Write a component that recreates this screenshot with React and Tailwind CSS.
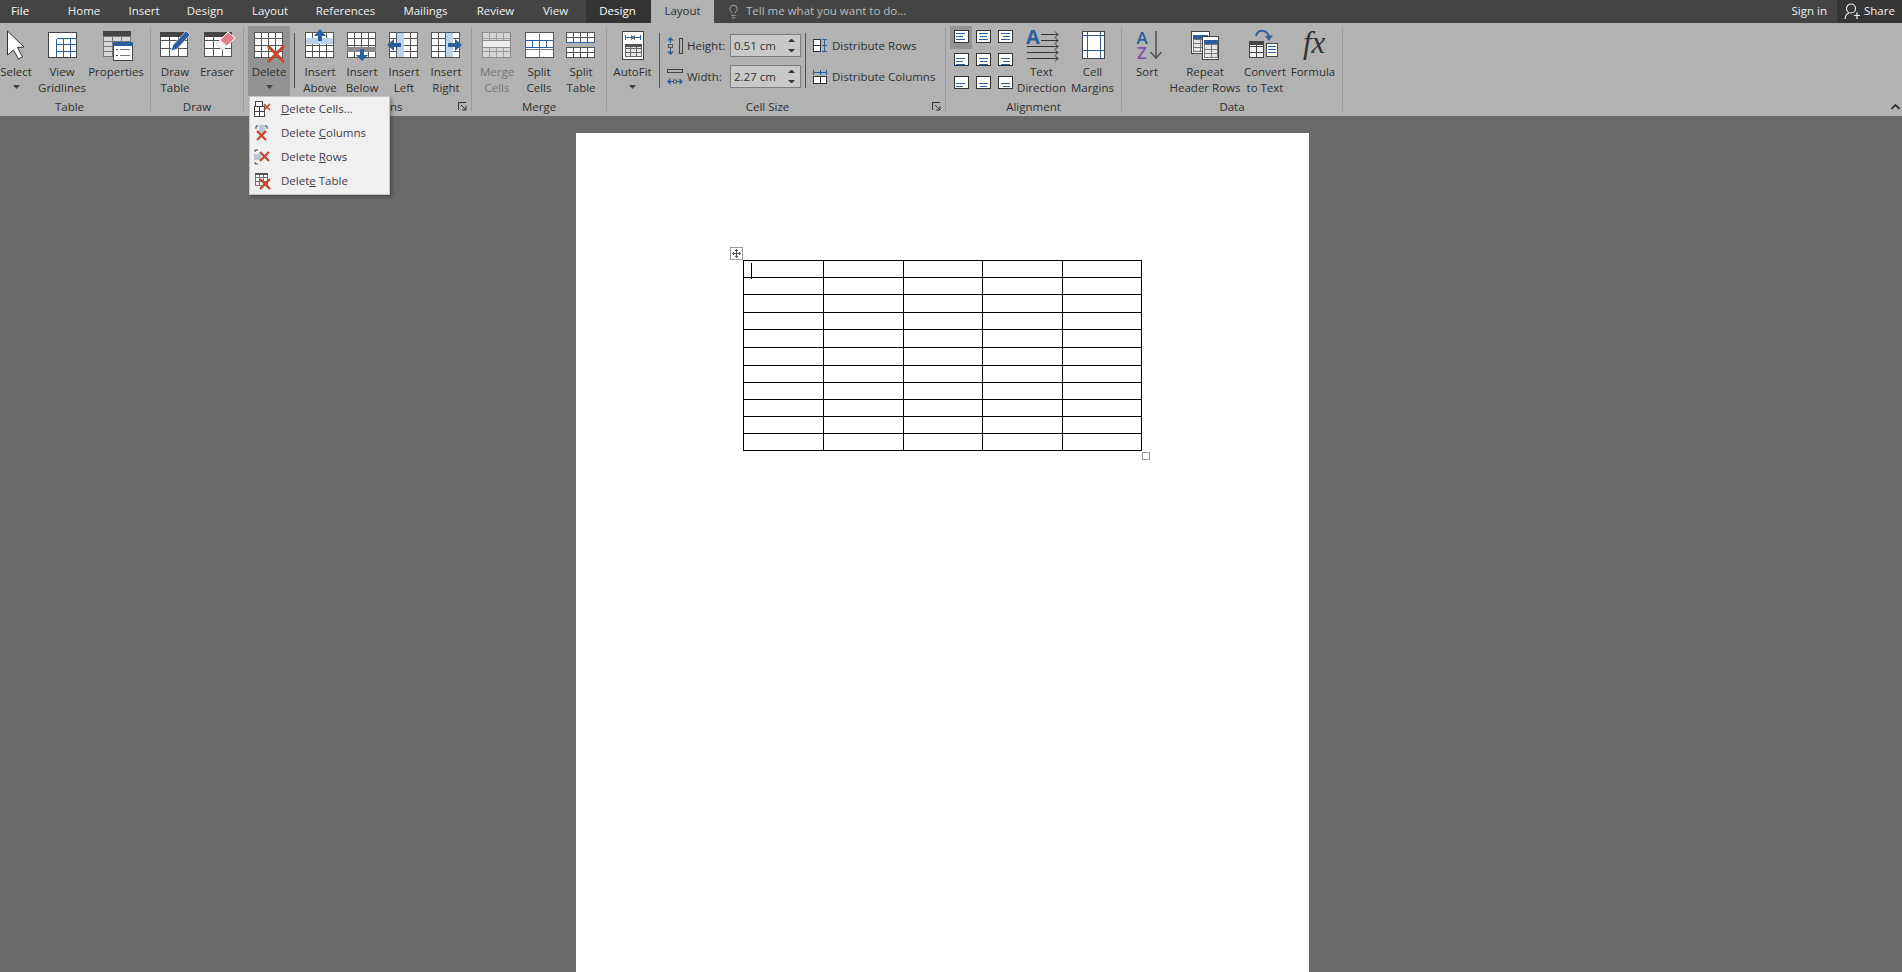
import { Lightbulb } from "lucide-react";

const BLUE = "#2b5f9e";
const RED = "#c8442b";
const DARK = "#444";

const tabs = [
  ["Home", "w-[56px]"],
  ["Insert", "w-[64px]"],
  ["Design", "w-[58px]"],
  ["Layout", "w-[72px]"],
  ["References", "w-[79px]"],
  ["Mailings", "w-[81px]"],
  ["Review", "w-[59px]"],
  ["View", "w-[61px]"],
];

function Grid({ x, y, w, h, c, r, s = DARK, fill = "white", head, inner }) {
  const lines = [];
  for (let i = 1; i < c; i++) {
    const lx = Math.round(x + (w * i) / c) + 0.5;
    lines.push(<line key={"c" + i} x1={lx} x2={lx} y1={y} y2={y + h} stroke={inner || s} />);
  }
  for (let i = 1; i < r; i++) {
    const ly = Math.round(y + (h * i) / r) + 0.5;
    lines.push(<line key={"r" + i} y1={ly} y2={ly} x1={x} x2={x + w} stroke={inner || s} />);
  }
  return (
    <g shapeRendering="crispEdges">
      <rect x={x + 0.5} y={y + 0.5} width={w} height={h} fill={fill} stroke={s} />
      {lines}
      {head && <rect x={x} y={y} width={w + 1} height={head} fill={s} />}
    </g>
  );
}

function Cross({ x, y, size = 14, w = 3 }) {
  return (
    <path d={`M${x} ${y}L${x + size} ${y + size}M${x + size} ${y}L${x} ${y + size}`} stroke={RED} strokeWidth={w} fill="none" />
  );
}

function Icon({ children }) {
  return (
    <svg width="36" height="38" viewBox="0 0 36 38" className="shrink-0">
      {children}
    </svg>
  );
}

const icons = {
  select: (
    <path d="M9.5 5 L26 21 L19.5 21.5 L24.5 31 L20.5 33 L15.5 24 L9.5 29 Z" fill="white" stroke="#333" />
  ),
  gridlines: (
    <g shapeRendering="crispEdges">
      <rect x="4.5" y="6.5" width="28" height="25" fill="white" stroke={DARK} />
      <path d="M12.5 12.5H32M12.5 18.5H32M12.5 25.5H32M12.5 12.5V31M19.5 12.5V31M26.5 12.5V31" stroke={BLUE} fill="none" />
    </g>
  ),
  properties: (
    <g shapeRendering="crispEdges">
      <Grid x={5} y={5} w={27} h={25} c={3} r={5} s="#777" fill="#d9d9d9" />
      <rect x="5" y="5" width="28" height="5" fill={DARK} />
      <rect x="15.5" y="16.5" width="19" height="18" fill="white" stroke={DARK} />
      <rect x="15" y="16" width="20" height="4" fill={BLUE} />
      <path d="M18 23.5H20M18 29.5H20" stroke={DARK} />
      <path d="M22 23.5H32M22 29.5H32" stroke="#777" />
    </g>
  ),
  draw: (
    <g>
      <Grid x={3} y={6} w={27} h={24} c={3} r={3} s="#555" />
      <rect x="3" y="6" width="28" height="5" fill={DARK} shapeRendering="crispEdges" />
      <path d="M14 25 L16 19 L29 5 L33 9 L20 23 Z" fill={BLUE} stroke="white" strokeWidth="0.6" />
    </g>
  ),
  eraser: (
    <g>
      <Grid x={5} y={6} w={27} h={24} c={3} r={3} s="#555" />
      <rect x="5" y="6" width="28" height="5" fill={DARK} shapeRendering="crispEdges" />
      <path d="M17 18 L29 6 L36 12 L24 24 Z" fill="#e0808f" stroke="white" />
      <path d="M17 18 L21 14 L28 20 L24 24 Z" fill="#f2f2f2" stroke="#ddd" />
    </g>
  ),
  del: (
    <g>
      <Grid x={3} y={6} w={28} h={25} c={4} r={4} s="#555" />
      <Cross x={17} y={20} size={16} />
    </g>
  ),
  above: (
    <g>
      <Grid x={3} y={6} w={28} h={25} c={4} r={4} s="#555" />
      <rect x="4" y="12" width="27" height="6" fill="#bcd3e8" />
      <path d="M18 3 L24 10 H20 V15 H16 V10 H12 Z" fill={BLUE} />
    </g>
  ),
  below: (
    <g>
      <Grid x={3} y={6} w={28} h={25} c={4} r={4} s="#555" />
      <rect x="3" y="21" width="29" height="5" fill="#8a8a8a" />
      <path d="M18 35 L24 29 H20 V23 H16 V29 H12 Z" fill={BLUE} />
    </g>
  ),
  left: (
    <g>
      <Grid x={3} y={6} w={28} h={25} c={4} r={4} s="#555" />
      <rect x="11" y="7" width="7" height="24" fill="#bcd3e8" />
      <path d="M1 19 L8 13 V17 H15 V21 H8 V25 Z" fill={BLUE} />
    </g>
  ),
  right: (
    <g>
      <Grid x={3} y={6} w={28} h={25} c={4} r={4} s="#555" />
      <rect x="18" y="7" width="7" height="24" fill="#bcd3e8" />
      <path d="M34 19 L27 13 V17 H20 V21 H27 V25 Z" fill={BLUE} />
    </g>
  ),
  merge: (
    <g>
      <Grid x={3} y={6} w={28} h={25} c={4} r={4} s="#8c8c8c" fill="#d6d6d6" inner="#9c9c9c" />
      <rect x="4" y="15" width="27" height="6" fill="#ececec" />
      <path d="M3.5 14.5H31M3.5 21.5H31" stroke="#8c8c8c" shapeRendering="crispEdges" />
    </g>
  ),
  split: (
    <g>
      <Grid x={4} y={6} w={28} h={25} c={2} r={3} s="#555" inner="#777" />
      <rect x="4.5" y="14.5" width="28" height="7" fill="white" stroke={BLUE} shapeRendering="crispEdges" />
      <path d="M11.5 14.5V21M18.5 14.5V21M25.5 14.5V21" stroke={BLUE} shapeRendering="crispEdges" />
    </g>
  ),
  splitTable: (
    <g>
      <Grid x={3} y={6} w={28} h={10} c={4} r={2} s="#555" />
      <path d="M3 16.5H32" stroke={BLUE} shapeRendering="crispEdges" />
      <Grid x={3} y={21} w={28} h={10} c={4} r={2} s="#555" />
    </g>
  ),
  autofit: (
    <g shapeRendering="crispEdges">
      <rect x="7.5" y="5.5" width="21" height="28" fill="white" stroke={DARK} />
      <path d="M10 11.5H26M10.5 9V14M25.5 9V14" stroke={BLUE} />
      <path d="M16 9.5L20 13.5M20 9.5L16 13.5" stroke="#777" />
      <Grid x={10} y={18} w={16} h={12} c={3} r={3} s="#666" fill="#e8e8e8" />
      <rect x="10" y="18" width="17" height="3" fill="#555" />
    </g>
  ),
  textDir: (
    <g>
      <text x="2" y="18" fontFamily="Open Sans, sans-serif" fontWeight="700" fontSize="20" fill={BLUE}>A</text>
      {[8, 14, 20, 26, 32].map((y, i) => (
        <path key={y} d={`M${i < 2 ? 17 : 3} ${y + 0.5}H34M31 ${y - 2.5}L34 ${y + 0.5}L31 ${y + 3.5}`} stroke="#333" fill="none" />
      ))}
    </g>
  ),
  margins: (
    <g shapeRendering="crispEdges">
      <rect x="7.5" y="5.5" width="22" height="27" fill="white" stroke={DARK} />
      <path d="M8 24.5H29M8 9.5H29M12.5 6V32M25.5 6V32" stroke={BLUE} />
    </g>
  ),
  sort: (
    <g>
      <text x="7.5" y="18" fontFamily="Open Sans, sans-serif" fontWeight="600" fontSize="17" fill={BLUE}>A</text>
      <text x="8" y="33" fontFamily="Open Sans, sans-serif" fontWeight="600" fontSize="17" fill="#7b4fa3">Z</text>
      <path d="M27 5V31M21.5 26L27 32L32.5 26" stroke="#555" strokeWidth="1.6" fill="none" />
    </g>
  ),
  repeat: (
    <g shapeRendering="crispEdges">
      <rect x="4.5" y="5.5" width="18" height="22" fill="white" stroke={DARK} />
      <Grid x={6} y={9} w={14} h={16} c={2} r={4} s="#777" fill="#e6e6e6" />
      <rect x="6" y="9" width="15" height="4" fill={BLUE} />
      <rect x="15.5" y="10.5" width="16" height="23" fill="white" stroke={DARK} />
      <Grid x={17} y={14} w={13} h={17} c={2} r={4} s="#777" fill="#e6e6e6" />
      <rect x="17" y="14" width="14" height="4" fill={BLUE} />
    </g>
  ),
  convert: (
    <g>
      <Grid x={2} y={15} w={14} h={16} c={2} r={3} s="#444" fill="#eee" />
      <rect x="2" y="15" width="15" height="4" fill={DARK} />
      <rect x="19.5" y="17.5" width="11" height="13" fill="white" stroke={DARK} shapeRendering="crispEdges" />
      <path d="M21 20.5H29M21 23.5H29M21 26.5H29" stroke={BLUE} shapeRendering="crispEdges" />
      <path d="M9 10C11 3 20 3 22 11" stroke={BLUE} strokeWidth="2" fill="none" />
      <path d="M18 10L22 15L26 9Z" fill={BLUE} />
    </g>
  ),
  fx: (
    <text x="8" y="27" fontFamily="Liberation Serif, serif" fontStyle="italic" fontSize="31" fill="#333">fx</text>
  ),
};

function Btn({ w, icon, lines, caret, disabled }) {
  return (
    <div className={`${w} h-full flex flex-col items-center ${disabled ? "text-[#767676]" : ""}`}>
      <Icon>{icons[icon]}</Icon>
      {lines.map((l) => (
        <span key={l} className="h-4 leading-4 whitespace-nowrap">{l}</span>
      ))}
      {caret && (
        <svg width="7" height="4" viewBox="0 0 7 4" className="mt-[5px]">
          <path d="M0 0H7L3.5 4Z" fill="#444" />
        </svg>
      )}
    </div>
  );
}

function Launcher() {
  return (
    <svg width="9" height="9" viewBox="0 0 9 9" className="absolute right-[4px] bottom-[5px]">
      <path d="M0.5 8V0.5H8M3 3L7.5 7.5M8 4V8H4" stroke="#333" fill="none" />
    </svg>
  );
}

function Group({ w, label, pl = "", labelClass = "", launcher, children }) {
  return (
    <div className={`${w} relative shrink-0 flex flex-col pt-[3px]`}>
      <div className={`h-[70px] flex ${pl}`}>{children}</div>
      <div className={`mt-[3px] h-4 leading-4 text-center whitespace-nowrap ${labelClass}`}>{label}</div>
      {launcher && <Launcher />}
    </div>
  );
}

function Sep() {
  return <div className="w-px shrink-0 mt-1 mb-[5px] bg-[#9b9b9b]" />;
}

function InnerSep({ className }) {
  return <div className={`w-px h-[55px] mt-[7px] bg-[#555] shrink-0 ${className}`} />;
}

function Spinner({ value }) {
  return (
    <div className="w-[71px] h-[23px] flex items-center justify-between pl-[3px] pr-[5px] border border-[#7d7d7d] bg-[#c9c9c9]">
      <span>{value}</span>
      <svg width="7" height="15" viewBox="0 0 7 15">
        <path d="M0.5 4L3.5 1L6.5 4M0.5 11L3.5 14L6.5 11" fill="#333" stroke="#333" />
      </svg>
    </div>
  );
}

function Align({ v, h, active }) {
  const top = [3, 5, 7][v];
  const rows = [0, 3, 6].map((d, i) => {
    const len = i === 1 ? 7 : 9;
    const x = h === 0 ? 2 : h === 1 ? 7 - len / 2 : 12 - len;
    return <path key={d} d={`M${x} ${top + d + 0.5}h${len}`} stroke={BLUE} />;
  });
  return (
    <div className={`h-[23px] flex justify-center pt-1 ${active ? "bg-[#939393]" : ""}`}>
      <svg width="15" height="13" viewBox="0 0 15 13" shapeRendering="crispEdges">
        <rect x="0.5" y="0.5" width="14" height="12" fill="white" stroke="#333" />
        {rows}
      </svg>
    </div>
  );
}

function DeleteMenu() {
  const items = [
    [
      <>
        <Grid x={1} y={0} w={7} h={5} c={1} r={1} s="#444" />
        <Grid x={0} y={5} w={10} h={10} c={2} r={2} s="#444" />
        <Cross x={10} y={3} size={6} w={1.6} />
      </>,
      <><u>D</u>elete Cells...</>,
    ],
    [
      <>
        <path d="M2 4V1H4M13 4V1H11" stroke="#444" fill="none" />
        <rect x="5" y="0" width="6" height="8" fill="#b9c7d6" />
        <Cross x={3} y={6} size={9} w={2.2} />
      </>,
      <>Delete <u>C</u>olumns</>,
    ],
    [
      <>
        <path d="M4 1H1V3M4 15H1V13" stroke="#444" fill="none" />
        <rect x="0" y="5" width="7" height="6" fill="#b9c7d6" />
        <Cross x={6} y={3} size={9} w={2.2} />
      </>,
      <>Delete <u>R</u>ows</>,
    ],
    [
      <>
        <Grid x={1} y={0} w={12} h={12} c={3} r={3} s="#777" />
        <rect x="1" y="0" width="13" height="2" fill="#555" />
        <Cross x={6} y={6} size={10} w={2.4} />
      </>,
      <>Delet<u>e</u> Table</>,
    ],
  ];
  return (
    <div className="absolute left-[249px] top-[96px] w-[141px] h-[99px] bg-[#f0f0f0] border border-[#c6c6c6] shadow-[2px_2px_3px_rgba(0,0,0,0.3)] text-[#3c3c4c]">
      {items.map(([icon, text], i) => (
        <div key={i} className="h-6 flex items-center pl-[4px]">
          <svg width="17" height="17" viewBox="0 0 17 17" className="shrink-0">{icon}</svg>
          <span className="ml-[10px] whitespace-nowrap">{text}</span>
        </div>
      ))}
    </div>
  );
}

function WordTable() {
  const heights = ["h-[17px]", "h-[17px]", "h-[18px]", "h-[17px]", "h-[18px]", "h-[18px]", "h-[17px]", "h-[17px]", "h-[17px]", "h-[17px]", "h-[17px]"];
  const cols = ["w-[80px]", "w-[80px]", "w-[79px]", "w-[80px]", "w-[79px]"];
  return (
    <div className="relative w-[399px]">
      <svg width="13" height="13" viewBox="0 0 13 13" className="absolute -left-[13px] -top-[13px]">
        <rect x="0.5" y="0.5" width="12" height="12" fill="white" stroke="#999" />
        <path d="M6.5 2V11M2 6.5H11M5 3.5H8M5 9.5H8M3.5 5V8M9.5 5V8" stroke="#555" />
      </svg>
      <table className="table-fixed border-collapse w-[399px]">
        <colgroup>
          {cols.map((c, i) => <col key={i} className={c} />)}
        </colgroup>
        <tbody>
          {heights.map((h, r) => (
            <tr key={r} className={h}>
              {cols.map((c, i) => (
                <td key={i} className="border border-black p-0 relative">
                  {r === 0 && i === 0 && <div className="absolute left-[7px] top-[2px] w-px h-[16px] bg-black" />}
                </td>
              ))}
            </tr>
          ))}
        </tbody>
      </table>
      <div className="absolute -right-[8px] -bottom-[9px] w-2 h-2 bg-white border border-[#999]" />
    </div>
  );
}

export default function App() {
  return (
    <div className="relative h-[972px] flex flex-col overflow-hidden font-['Open_Sans',sans-serif] text-[11.5px] text-[#303030]">
      {/* title bar with tabs */}
      <div className="h-[23px] shrink-0 flex bg-[#444444] text-[#f0f0f0] leading-[21px]">
        <div className="w-[40px] text-center text-white">File</div>
        <div className="w-4" />
        {tabs.map(([t, w], i) => (
          <div key={i} className={`${w} text-center`}>{t}</div>
        ))}
        <div className="w-[65px] pr-[2px] text-center bg-[#333333] text-white">Design</div>
        <div className="w-[63px] text-center bg-[#b2b2b2] text-[#303030]">Layout</div>
        <div className="flex items-center ml-[12px] text-[#bdbdbd]">
          <Lightbulb size={15} strokeWidth={1.25} />
          <span className="ml-[5px] -mt-[2px]">Tell me what you want to do...</span>
        </div>
        <div className="ml-auto flex">
          <div className="mr-[10px]">Sign in</div>
          <div className="w-[65px] flex items-center bg-[#363636] pl-[7px]">
            <svg width="16" height="17" viewBox="0 0 16 17" fill="none" stroke="#f0f0f0" strokeWidth="1.2">
              <circle cx="7" cy="5.5" r="4.5" />
              <path d="M1 16C1.5 12.5 3 10.5 5 10M10 12.5H16M13 9.5V16" />
            </svg>
            <span className="ml-[4px] -mt-[2px]">Share</span>
          </div>
        </div>
      </div>

      {/* ribbon */}
      <div className="relative h-[93px] shrink-0 flex bg-[#b2b2b2]">
        <Group w="w-[150px]" label="Table" labelClass="pr-[11px]">
          <Btn w="w-[32px]" icon="select" lines={["Select"]} caret />
          <Btn w="w-[60px]" icon="gridlines" lines={["View", "Gridlines"]} />
          <Btn w="w-[48px]" icon="properties" lines={["Properties"]} />
        </Group>
        <Sep />
        <Group w="w-[92px]" pl="pl-[3px]" label="Draw">
          <Btn w="w-[42px]" icon="draw" lines={["Draw", "Table"]} />
          <Btn w="w-[42px]" icon="eraser" lines={["Eraser"]} />
        </Group>
        <Sep />
        <Group w="w-[227px]" pl="pl-[4px]" label="Rows & Columns" launcher>
          <div className="w-[42px] h-full bg-[#939393]">
            <Btn w="w-[42px]" icon="del" lines={["Delete"]} caret />
          </div>
          <InnerSep className="mx-1" />
          <Btn w="w-[42px]" icon="above" lines={["Insert", "Above"]} />
          <Btn w="w-[42px]" icon="below" lines={["Insert", "Below"]} />
          <Btn w="w-[42px]" icon="left" lines={["Insert", "Left"]} />
          <Btn w="w-[42px]" icon="right" lines={["Insert", "Right"]} />
        </Group>
        <Sep />
        <Group w="w-[134px]" pl="pl-[4px]" label="Merge">
          <Btn w="w-[42px]" icon="merge" lines={["Merge", "Cells"]} disabled />
          <Btn w="w-[42px]" icon="split" lines={["Split", "Cells"]} />
          <Btn w="w-[42px]" icon="splitTable" lines={["Split", "Table"]} />
        </Group>
        <Sep />
        <Group w="w-[338px]" pl="pl-[3px]" label="Cell Size" labelClass="pr-[17px]" launcher>
          <Btn w="w-[45px]" icon="autofit" lines={["AutoFit"]} caret />
          <InnerSep className="ml-1" />
          <div className="ml-[7px] mt-2 flex flex-col gap-2">
            <div className="h-[23px] flex items-center">
              <svg width="16" height="18" viewBox="0 0 16 18" className="shrink-0">
                <path d="M3.5 0L7 3.5H0Z M3.5 18L0 14.5H7Z" fill={BLUE} />
                <rect x="1.5" y="7.5" width="4" height="3" fill="none" stroke="#555" />
                <path d="M3.5 3V6M3.5 11V15" stroke={BLUE} />
                <rect x="12.5" y="1.5" width="3" height="15" fill="none" stroke="#444" />
              </svg>
              <span className="ml-1 w-[43px]">Height:</span>
              <Spinner value="0.51 cm" />
            </div>
            <div className="h-[23px] flex items-center">
              <svg width="16" height="18" viewBox="0 0 16 18" className="shrink-0">
                <rect x="0.5" y="1.5" width="15" height="3" fill="none" stroke="#444" />
                <path d="M0 13.5L3.5 10V17Z M16 13.5L12.5 10V17Z" fill={BLUE} />
                <rect x="6.5" y="12" width="3" height="3" fill="none" stroke="#555" />
                <path d="M3 13.5H6M10 13.5H13" stroke={BLUE} />
              </svg>
              <span className="ml-1 w-[43px]">Width:</span>
              <Spinner value="2.27 cm" />
            </div>
          </div>
          <InnerSep className="ml-1" />
          <div className="ml-[7px] mt-2 flex flex-col gap-2">
            <div className="h-[23px] flex items-center">
              <svg width="15" height="14" viewBox="0 0 15 14" shapeRendering="crispEdges">
                <rect x="0.5" y="0.5" width="7" height="6" fill="white" stroke="#333" />
                <rect x="0.5" y="6.5" width="7" height="6" fill="white" stroke="#333" />
                <path d="M11.5 0V13M9 0.5H14M9 6.5H14M9 12.5H14" stroke={BLUE} />
              </svg>
              <span className="ml-1 whitespace-nowrap">Distribute Rows</span>
            </div>
            <div className="h-[23px] flex items-center">
              <svg width="15" height="14" viewBox="0 0 15 14" shapeRendering="crispEdges">
                <path d="M0 2.5H14M0.5 0V5M7.5 0V5M13.5 0V5" stroke={BLUE} />
                <rect x="0.5" y="6.5" width="7" height="7" fill="white" stroke="#333" />
                <rect x="7.5" y="6.5" width="6" height="7" fill="white" stroke="#333" />
              </svg>
              <span className="ml-1 whitespace-nowrap">Distribute Columns</span>
            </div>
          </div>
        </Group>
        <Sep />
        <Group w="w-[175px]" pl="pl-[4px]" label="Alignment">
          <div className="grid grid-cols-3 w-[66px] h-[69px] shrink-0">
            {[0, 1, 2].map((v) =>
              [0, 1, 2].map((h) => <Align key={v + "-" + h} v={v} h={h} active={v === 0 && h === 0} />)
            )}
          </div>
          <Btn w="w-[51px]" icon="textDir" lines={["Text", "Direction"]} />
          <Btn w="w-[51px]" icon="margins" lines={["Cell", "Margins"]} />
        </Group>
        <Sep />
        <Group w="w-[220px]" pl="pl-[8px]" label="Data">
          <Btn w="w-[34px]" icon="sort" lines={["Sort"]} />
          <div className="w-[6px]" />
          <Btn w="w-[70px]" icon="repeat" lines={["Repeat", "Header Rows"]} />
          <div className="w-px" />
          <Btn w="w-[48px]" icon="convert" lines={["Convert", "to Text"]} />
          <Btn w="w-[48px]" icon="fx" lines={["Formula"]} />
        </Group>
        <Sep />
        <svg width="9" height="6" viewBox="0 0 9 6" className="absolute right-[2px] bottom-[6px]">
          <path d="M0.5 5L4.5 1L8.5 5" stroke="#222" strokeWidth="1.6" fill="none" />
        </svg>
      </div>

      {/* document canvas */}
      <div className="flex-1 min-h-0 overflow-hidden bg-[#6a6a6a] pl-[576px] pt-[17px]">
        <div className="w-[733px] h-full bg-white pl-[167px] pt-[127px]">
          <WordTable />
        </div>
      </div>

      <DeleteMenu />
    </div>
  );
}
